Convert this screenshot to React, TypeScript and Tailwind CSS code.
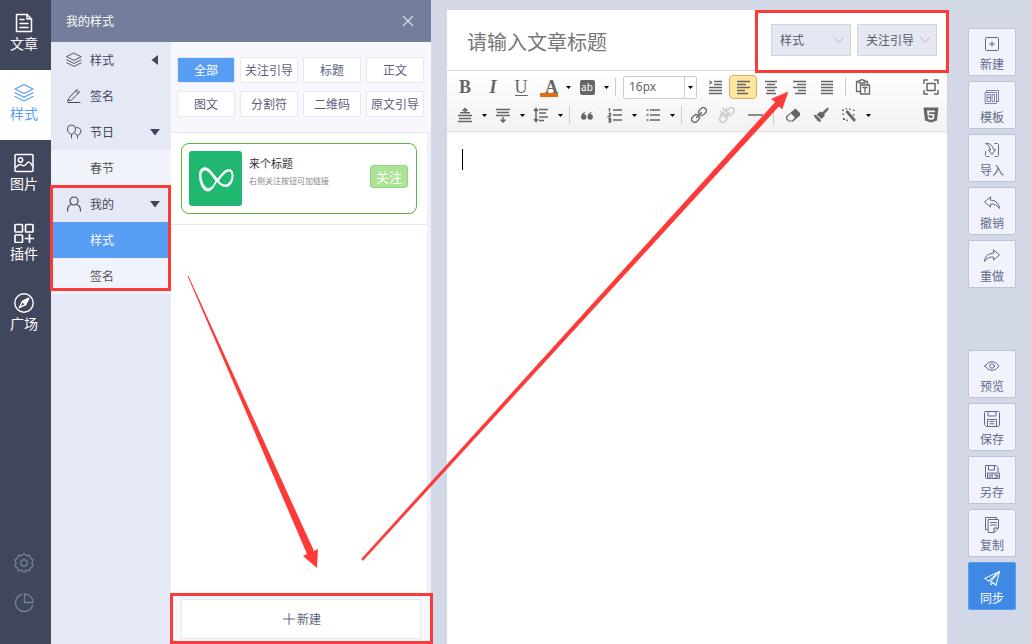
import { useState } from 'react';
import type { ReactNode } from 'react';
import clsx from 'clsx';

type IconProps = { children: ReactNode; size?: string; box?: number; width?: number };

function Line({ children, size = 'size-5', box = 20, width = 1.5 }: IconProps) {
	return (
		<svg
			className={clsx('shrink-0', size)}
			viewBox={`0 0 ${box} ${box}`}
			fill="none"
			stroke="currentColor"
			strokeWidth={width}
			strokeLinejoin="round"
			strokeLinecap="round"
			aria-hidden="true"
		>
			{children}
		</svg>
	);
}

function Solid({ children, box = 16, size = 'size-4' }: IconProps) {
	return (
		<svg className={clsx('shrink-0', size)} viewBox={`0 0 ${box} ${box}`} fill="currentColor" aria-hidden="true">
			{children}
		</svg>
	);
}

const layers = (
	<>
		<path d="M10 1.5 19 6l-9 4.5L1 6z" />
		<path d="m1 9.8 9 4.5 9-4.5M1 13.5 10 18l9-4.5" />
	</>
);

const mainNav = [
	{
		label: '文章',
		icon: (
			<Line width={1.5}>
				<path d="M2.500 1.500h10.500L17.500 6v12.500h-15z" />
				<path d="M13 1.500V6h4.500M6 6.500h4M6 10.500h8M6 14.500h8" />
			</Line>
		),
	},
	{ label: '样式', icon: <Line width={1.2}>{layers}</Line>, active: true },
	{
		label: '图片',
		icon: (
			<Line width={1.5}>
				<rect x="1" y="1.500" width="18" height="17" rx="1" />
				<circle cx="6.500" cy="7" r="2.200" />
				<path d="M1.500 14.500q4-4 6-2.500t4.500-.5q3-5.500 6.500 1.500" />
			</Line>
		),
	},
	{
		label: '插件',
		icon: (
			<Line width={1.7}>
				<rect x="1" y="1.500" width="7.500" height="7.500" rx=".8" />
				<rect x="11.500" y="1.500" width="7.500" height="7.500" rx=".8" />
				<rect x="1" y="12" width="7.500" height="7.500" rx=".8" />
				<path d="M15.500 11.500v8M11.500 15.500h8" />
			</Line>
		),
	},
	{
		label: '广场',
		icon: (
			<Line width={1.4}>
				<circle cx="10" cy="10" r="9.200" />
				<path d="m14.700 5.300-6.200 3-3.200 6.400 6.200-3z" />
				<path d="m14.700 5.300-6.200 3 3 3.400z" fill="currentColor" />
			</Line>
		),
	},
];

const filters = ['全部', '关注引导', '标题', '正文', '图文', '分割符', '二维码', '原文引导'];

const thin = { size: 'size-4', box: 16, width: 1 };

const topActions = [
	{
		label: '新建',
		icon: (
			<Line {...thin}>
				<rect x="1.500" y="1.500" width="13" height="13" rx="1" />
				<path d="M8 5.500v5M5.500 8h5" />
			</Line>
		),
	},
	{
		label: '模板',
		icon: (
			<Line {...thin} width={0.8}>
				<path d="M1.500 3.500h11v11h-11zM2.500 3.500v-2h12v11h-2M3.500 5.500h3v3h-3zM3.500 8.500h3v4h-3zM8.500 5.500h2v7h-2z" />
			</Line>
		),
	},
	{
		label: '导入',
		icon: (
			<Line {...thin}>
				<path d="M1.500 9.500v4l1 1H5M11 14.500h2.500l1-1v-11l-1-1H11" />
				<path d="M2 1.500q6-1 7.500 6H11.500L8 12.500 4.500 8h2Q6 3.500 2 1.500z" />
			</Line>
		),
	},
	{
		label: '撤销',
		icon: (
			<Line {...thin}>
				<path d="M6.500 2 .5 7l6 5V9q6-.5 9 4.500Q15 5.500 6.500 5z" />
			</Line>
		),
	},
	{
		label: '重做',
		icon: (
			<Line {...thin}>
				<path d="m9.500 2 6 5-6 5V9q-6-.5-9 4.500Q1 5.500 9.500 5z" />
			</Line>
		),
	},
];

const bottomActions = [
	{
		label: '预览',
		icon: (
			<Line {...thin}>
				<path d="M1 8q3-4.500 7-4.500T15 8q-3 4.500-7 4.500T1 8z" />
				<circle cx="8" cy="8" r="2.300" />
			</Line>
		),
	},
	{
		label: '保存',
		icon: (
			<Line {...thin}>
				<path d="M1.500.5h13l1 1v13l-1 1h-12l-2-2v-12zM4 .5v4.500h8V.5M3.500 15.500v-7h9v7M6 10.500h4M6 12.800h4" />
			</Line>
		),
	},
	{
		label: '另存',
		icon: (
			<Line {...thin}>
				<path d="M7 14.500H2.500l-1-1V1.500H12l2 2V8M4.500 1.500V6h6V1.500M3.500 14V9h4M5 11h2M5 13h2M8.500 9h7v5.500h-7zM10 10.500l4 2M13 10.500l1 2-2.500 1" />
			</Line>
		),
	},
	{
		label: '复制',
		icon: (
			<Line {...thin}>
				<path d="M3.500 12.500h-2v-12h11v2M4.500 2.500h10v8.500L10 15.500H4.500zM14.500 11H10v4.500M6.500 5.500h6M6.500 8h6" />
			</Line>
		),
	},
	{
		label: '同步',
		primary: true,
		icon: (
			<Line {...thin}>
				<path d="M15.500 1.500.5 8.500l4 2.500zM15.500 1.500 4.500 11M7 11.500V15l1.500-2 3.500 2zM15.500 1.500 12 15M7 11.500l8.500-10" />
			</Line>
		),
	},
];

function Caret() {
	return (
		<span className="flex w-2.5 justify-center">
			<svg className="h-[3px] w-[5px]" viewBox="0 0 5 3" fill="#000" aria-hidden="true">
				<path d="M0 0h5L2.500 3z" />
			</svg>
		</span>
	);
}

type ToolProps = { label: string; children: ReactNode; caret?: boolean; active?: boolean; faded?: boolean };

function Tool({ label, children, caret, active, faded }: ToolProps) {
	return (
		<button type="button" title={label} aria-label={label} className="flex h-6 items-center">
			<span
				className={clsx(
					'flex h-6 w-7 items-center justify-center rounded-sm border',
					active ? 'border-[#dcac6c] bg-[#ffe69f]' : 'border-transparent',
					faded ? 'text-[#c4c4c4]' : 'text-[#666]'
				)}
			>
				{children}
			</span>
			{caret && <Caret />}
		</button>
	);
}

function Sep() {
	return (
		<span className="flex w-2 justify-center">
			<span className="h-[18px] w-px bg-[#ccc]" />
		</span>
	);
}

function Bars({ d }: { d: string }) {
	return (
		<svg className="size-4" viewBox="0 0 16 16" fill="none" stroke="currentColor" strokeWidth="1.500" aria-hidden="true">
			<path d={d} />
		</svg>
	);
}

function Toolbar() {
	return (
		<div className="border-y border-t-[#ddd] border-b-[#e4e4e4] bg-linear-to-b from-white to-[#f2f2f2] py-0.5 pr-0.5 pl-1 shadow-xs">
			<div className="flex h-7 items-center">
				<Tool label="加粗">
					<b className="font-['Liberation_Serif',serif] text-lg leading-5">B</b>
				</Tool>
				<Tool label="斜体">
					<i className="font-['Liberation_Serif',serif] text-lg leading-5 font-bold">I</i>
				</Tool>
				<Tool label="下划线">
					<span className="border-b border-current font-['Liberation_Serif',serif] text-lg leading-4">U</span>
				</Tool>
				<Tool label="字体颜色" caret>
					<span className="h-5 w-[18px] border-b-4 border-[#e46c0a] text-right font-['Liberation_Serif',serif] text-lg leading-5 font-bold">
						A
					</span>
				</Tool>
				<Tool label="背景色" caret>
					<span className="h-[15px] w-[15px] rounded-xs bg-[#666] text-center font-['Noto_Sans',sans-serif] text-[10px] leading-[14px] text-white">
						ab
					</span>
				</Tool>
				<Sep />
				<div className="relative mx-1">
					<select
						aria-label="字号"
						defaultValue="16px"
						className="block h-[23px] w-[74px] appearance-none rounded-xs border border-[#ccc] bg-white pl-[5px] font-['Noto_Sans',sans-serif] text-xs text-[#666]"
					>
						<option>14px</option>
						<option>16px</option>
						<option>18px</option>
					</select>
					<span className="pointer-events-none absolute inset-y-px right-px flex w-3 items-center justify-center border-l border-[#ccc]">
						<Caret />
					</span>
				</div>
				<Tool label="首行缩进">
					<Bars d="M7 2.500h8M7 5.500h8M2 8.500h13M2 11.500h13M2 14.500h13M2.500 2l2 1.500-2 1.500" />
				</Tool>
				<Tool label="居左" active>
					<Bars d="M2 2.500h13M2 5.500h9M2 8.500h13M2 11.500h8M2 14.500h11" />
				</Tool>
				<Tool label="居中">
					<Bars d="M2 2.500h12M4 5.500h8M2 8.500h12M4 11.500h8M3 14.500h10" />
				</Tool>
				<Tool label="居右">
					<Bars d="M2 2.500h13M6 5.500h9M2 8.500h13M7 11.500h8M4 14.500h11" />
				</Tool>
				<Tool label="两端对齐">
					<Bars d="M2 2.500h12M2 5.500h12M2 8.500h12M2 11.500h12M2 14.500h12" />
				</Tool>
				<Sep />
				<Tool label="粘贴">
					<Line size="size-4" box={16} width={1.3}>
						<path d="M5 12.500H1.500V2.500H4M10 2.500h2.500V5M4 1.500h1.500l1-1h1l1 1H10V4H4zM5.500 6h9v9h-9z" />
						<path d="M8 8.500h4M10 8.500v4.500" />
					</Line>
				</Tool>
				<span className="ml-auto">
					<Tool label="全屏">
						<Line size="size-4" box={16} width={1.5}>
							<path d="M1 4.500V1h3.500M11.500 1H15v3.500M15 11.500V15h-3.500M4.500 15H1v-3.500M4 4.500h8v7H4z" />
						</Line>
					</Tool>
				</span>
			</div>
			<div className="flex h-7 items-center">
				<Tool label="段前距" caret>
					<Bars d="M1 8.500h14M2 11.500h12M1 14.500h14M3 5.800h10M8 6V2M5.500 4 8 1.500 10.500 4" />
				</Tool>
				<Tool label="段后距" caret>
					<Bars d="M1 2.500h14M2 5.500h12M1 8.500h14M8 10v4.500M5.500 12.500 8 15l2.500-2.500" />
				</Tool>
				<Tool label="行间距" caret>
					<Bars d="M6 2.500h9M6 6h7M6 10h9M6 13.500h5M3 2v12M1 4l2-2.500L5 4M1 12l2 2.500L5 12" />
				</Tool>
				<Sep />
				<Tool label="引用">
					<Solid>
						<path d="M7.500 4.500Q2 5.500 2 10a2.700 2.700 0 1 0 3-2.700Q5 5.500 7.500 4.500zM14 4.500Q8.500 5.500 8.500 10a2.700 2.700 0 1 0 3-2.700q0-1.800 2.500-2.800z" />
					</Solid>
				</Tool>
				<Tool label="有序列表" caret>
					<Bars d="M6 3h9M6 8h9M6 13h9M2.500 1v3.500M1.500 6.500h2v1.500l-2 1.500h2M1.500 11.500h2V15h-2M1.500 13h2" />
				</Tool>
				<Tool label="无序列表" caret>
					<Bars d="M5 3h10M5 8h10M5 13h10M1.500 3h2M1.500 8h2M1.500 13h2" />
				</Tool>
				<Sep />
				<Tool label="超链接">
					<Line size="size-4" box={16} width={1.3}>
						<g transform="rotate(-45 8 8)">
							<rect x="-1" y="5" width="8" height="6" rx="2.500" />
							<rect x="9" y="5" width="8" height="6" rx="2.500" />
							<path d="M4.500 8h7" />
						</g>
					</Line>
				</Tool>
				<Tool label="取消链接" faded>
					<Line size="size-4" box={16} width={1.3}>
						<g transform="rotate(-45 8 8)">
							<rect x="-1" y="5" width="8" height="6" rx="2.500" />
							<rect x="9" y="5" width="8" height="6" rx="2.500" />
							<path d="M4.500 8h7" />
						</g>
						<path d="m3.500 1 2 3M7.500 1 7 4M1 4.500l3.500 1M1.500 7.500 4 7" />
					</Line>
				</Tool>
				<Tool label="分隔线">
					<Bars d="M1 8h15" />
				</Tool>
				<Sep />
				<span className="ml-0.5 flex">
					<Tool label="清除格式">
						<Solid>
							<path d="M10.500 1.500 15 6v2.500l-7 6H3.500L1 12V9.500zM6 6.500l-4 4V11l2 2.500h3l3-3z" fillRule="evenodd" />
						</Solid>
					</Tool>
					<Tool label="格式刷">
						<Solid>
							<path d="M14.500.5 16 2l-5 5.500 1 1L8.500 12 3.500 7.500 7.500 4.500l1.500 1zM.5 8l2.500 0 5 5-1 2.500Q6 14 5 13.500l-.5 1Q4 12 2.500 11.500z" />
						</Solid>
					</Tool>
					<Tool label="自动排版" caret>
						<Solid>
							<path d="m4.500 5 2-2L15 13l-2 2zM1 2.500h2v1.500H1zM8 1.500h1.500V3H8zM12 2.500h1.500V4H12zM4.500 1H6v1.500H4.500zM1.500 6.500H3V8H1.500zM12 7h1.500v1.500H12zM2 11h2v2H2zM5.500 12.500H7V14H5.500z" />
						</Solid>
					</Tool>
				</span>
				<span className="ml-auto">
					<Tool label="源代码">
						<Solid>
							<path
								d="M.5.5h15L14 13.500 8 15.500l-6-2zM4 3.500l.5 5h5l-.2 2.200L8 11.200l-1.500-.5-.1-1.200H4.700l.3 2.600 3 1 3-1 .5-5.200H6.200L6 5.200h5.800l.2-1.700z"
								fillRule="evenodd"
							/>
						</Solid>
					</Tool>
				</span>
			</div>
		</div>
	);
}

type NavRowProps = { label: string; icon: ReactNode; arrow?: 'left' | 'down' };

function NavRow({ label, icon, arrow }: NavRowProps) {
	return (
		<button type="button" className="flex h-9 w-full items-center gap-2 pr-[11px] pl-[15px] text-xs text-[#40465b]">
			{icon}
			{label}
			{arrow && (
				<svg className="ml-auto size-2.5" viewBox="0 0 10 10" fill="currentColor" aria-hidden="true">
					<path d={arrow === 'left' ? 'M8 0v10L1.500 5z' : 'M0 2h10L5 8.500z'} />
				</svg>
			)}
		</button>
	);
}

function NavChild({ label, active }: { label: string; active?: boolean }) {
	return (
		<button
			type="button"
			className={clsx(
				'h-9 w-full pl-[39px] text-left text-xs',
				active ? 'bg-[#579df4] text-white' : 'bg-[#f0f3fb] text-[#555]'
			)}
		>
			{label}
		</button>
	);
}

function StylePanel() {
	const [filter, setFilter] = useState('全部');

	return (
		<section className="flex w-[380px] shrink-0 flex-col">
			<header className="flex h-[42px] items-center justify-between bg-[#747d9a] px-[15px] text-xs text-white">
				<h2>我的样式</h2>
				<button type="button" aria-label="关闭" className="mr-0.5 text-[#d5d9e6]">
					<Line size="size-3" box={12} width={1.3}>
						<path d="m1.500 1.500 9 9M10.500 1.500l-9 9" />
					</Line>
				</button>
			</header>
			<div className="flex flex-1">
				<nav className="w-[120px] bg-[#e5e9f5]">
					<NavRow label="样式" arrow="left" icon={<Line size="size-4" width={1.1}>{layers}</Line>} />
					<NavRow
						label="签名"
						icon={
							<Line {...thin}>
								<path d="M3 10 11 1.500l2.500 2.500L5.500 12 2 13zM9.500 3l2.500 2.500M2 14.500h12" />
							</Line>
						}
					/>
					<NavRow
						label="节日"
						arrow="down"
						icon={
							<Line {...thin} width={0.9}>
								<path d="M5.500 10.500C3 9.500 1.500 8 1.500 5a4 4 0 0 1 8 0C9.500 8 8 9.500 5.500 10.500zv3.500M10.500 3.500c3 0 4.500 1.500 4.500 3.500q0 3-3.500 4.500Q9.500 10.500 8.800 9M11.500 11.500v2.500" />
							</Line>
						}
					/>
					<NavChild label="春节" />
					<div className="relative">
						<NavRow
							label="我的"
							arrow="down"
							icon={
								<Line {...thin} width={1.2}>
									<circle cx="8" cy="5" r="4" />
									<path d="M1.500 15q0-6 4-6.500M14.500 15q0-6-4-6.500" />
								</Line>
							}
						/>
						<NavChild label="样式" active />
						<NavChild label="签名" />
						<div className="pointer-events-none absolute -top-px right-0 bottom-[3px] -left-px border-3 border-[#fc3a38]" />
					</div>
				</nav>
				<div className="flex flex-1 flex-col bg-white">
					<div className="grid grid-cols-4 gap-x-[5px] gap-y-2 border-b border-[#e5e8f2] bg-[#f7f8fd] py-[15px] pr-[7px] pl-1.5">
						{filters.map((name) => (
							<button
								key={name}
								type="button"
								onClick={() => setFilter(name)}
								className={clsx(
									'h-[26px] rounded-xs border border-[#e5e8f2] text-xs whitespace-nowrap',
									filter === name ? 'bg-[#579df4] text-white' : 'bg-white text-[#5a6180]'
								)}
							>
								{name}
							</button>
						))}
					</div>
					<div className="flex-1 border-r-4 border-[#f0f1f8]">
						<div className="border-b border-[#e5e8f2] p-2.5">
							<article className="flex items-start rounded-[8px] border border-[#5cb83c] py-[7px] pr-2 pl-[7px]">
								<div className="flex h-[55px] w-[53px] items-center justify-center rounded-[3px] bg-[#20b870]">
									<svg className="w-9" viewBox="0 0 36 26" fill="#f6fcf9" fillRule="evenodd" aria-hidden="true">
										<path d="M1 8C2 0 9-1 14 6l5.500 6.500C24 7 27 3 31 3c5 0 6 9 2.500 14.500S24 22 19 16c-3 5-5 9-9 9.500C4 26 .5 15 1 8zm2.500 1c0 6 3 13 7 13s5-4 7-7L13 9C9 3 4 3 3.500 9zm17.500 5.500c3 4.500 7.500 5.500 10.500 1.500S34 5.500 31 5.500s-6 4-10 9z" />
									</svg>
								</div>
								<div className="ml-[7px] flex-1 pt-1">
									<h3 className="text-[11px] leading-4 text-[#333]">来个标题</h3>
									<p className="mt-0.5 text-[8px] leading-4 text-[#888]">右侧关注按钮可加链接</p>
								</div>
								<button
									type="button"
									className="mt-3.5 h-[23px] rounded-[3px] border border-[#8fd97c] bg-[#ade397] px-[5px] text-[13px] leading-5 text-white"
								>
									关注
								</button>
							</article>
						</div>
					</div>
					<footer className="relative bg-[#f7f8fd] px-2.5 pt-1.5 pb-[5px]">
						<button
							type="button"
							className="flex h-10 w-full items-center justify-center gap-0.5 border border-[#e5e8f2] bg-white pl-0.5 text-xs text-[#5a6180]"
						>
							<Line size="size-3" box={12} width={1}>
								<path d="M6 .5v11M.5 6h11" />
							</Line>
							新建
						</button>
						<div className="pointer-events-none absolute inset-y-0 -right-0.5 -left-px border-3 border-[#fc3a38]" />
					</footer>
				</div>
			</div>
		</section>
	);
}

function TitleSelect({ label, options }: { label: string; options: string[] }) {
	return (
		<div className="relative">
			<select
				aria-label={label}
				className="h-8 w-20 appearance-none border border-[#d3d5da] bg-[#e4e8f2] pl-2 text-xs text-[#555a68]"
			>
				{options.map((o) => (
					<option key={o}>{o}</option>
				))}
			</select>
			<svg
				className="pointer-events-none absolute top-3 right-1.5 h-2 w-3"
				viewBox="0 0 12 8"
				fill="none"
				stroke="#b4b8c4"
				aria-hidden="true"
			>
				<path d="m1.500 1.500 4.500 5 4.500-5" />
			</svg>
		</div>
	);
}

type Action = { label: string; icon: ReactNode; primary?: boolean };

function ActionGroup({ items }: { items: Action[] }) {
	return (
		<div className="flex flex-col gap-[5px]">
			{items.map((a) => (
				<button
					key={a.label}
					type="button"
					className={clsx(
						'flex size-12 flex-col items-center gap-1 rounded-xs border pt-[7px] text-xs leading-4',
						a.primary
							? 'border-[#579df4] bg-[#3f89e4] text-white'
							: 'border-[#bcc4dc] bg-[#f0f3fc] text-[#626a88]'
					)}
				>
					{a.icon}
					{a.label}
				</button>
			))}
		</div>
	);
}

export default function App() {
	return (
		<div className="relative flex min-h-screen bg-[#d2d8e6] font-['Noto_Sans_CJK_SC',sans-serif]">
			<aside className="flex w-[51px] shrink-0 flex-col justify-between bg-[#40465b] text-white">
				<nav>
					{mainNav.map((item) => (
						<button
							key={item.label}
							type="button"
							className={clsx(
								'flex h-[70px] w-full flex-col items-center justify-center pr-[3px] pb-1 text-sm leading-5',
								item.active && 'bg-white text-[#579df4]'
							)}
						>
							{item.icon}
							{item.label}
						</button>
					))}
				</nav>
				<div className="flex flex-col items-center gap-5 pr-[3px] pb-[31px] text-[#747d9a]">
					<button type="button" aria-label="设置">
						<Line width={1.4}>
							<path d="m10 .8 2.400 1.800 3.100-.4 1 2.900 2.500 1.700-1 3.200 1 3-2.600 1.800-1 2.900-3.100-.4L10 19.200l-2.400-1.900-3.100.4-1-2.900L1 13l1-3-1-3.200 2.500-1.700 1-2.900 3.100.4z" />
							<circle cx="10" cy="10" r="3.200" />
						</Line>
					</button>
					<button type="button" aria-label="统计">
						<Line width={1.4}>
							<path d="M7.500 1.500a8.700 8.700 0 1 0 11 11M10.500 1v8.500H19A8.500 8.500 0 0 0 10.500 1z" />
						</Line>
					</button>
				</div>
			</aside>

			<StylePanel />

			<main className="flex flex-1 gap-[21px] pr-[15px] pl-4">
				<section className="mt-2.5 flex flex-1 flex-col bg-white">
					<div className="flex h-[60px] items-center justify-between pr-2.5 pl-5">
						<input
							aria-label="文章标题"
							placeholder="请输入文章标题"
							className="h-10 min-w-0 flex-1 pt-0.5 text-xl text-[#555] outline-none placeholder:text-[#777]"
						/>
						<div className="relative z-10 flex gap-1.5">
							<TitleSelect label="类型" options={['样式', '签名']} />
							<TitleSelect label="分类" options={filters.slice(1)} />
							<div className="pointer-events-none absolute -top-3.5 -right-3 -bottom-[17px] -left-4 border-3 border-[#fc3a38]" />
						</div>
					</div>
					<Toolbar />
					<div role="textbox" aria-label="正文" className="flex-1 px-[15px] pt-[17px]">
						<span className="block h-[21px] w-px bg-black" />
					</div>
				</section>
				<div className="flex flex-col justify-between pt-7 pb-[34px]">
					<ActionGroup items={topActions} />
					<ActionGroup items={bottomActions} />
				</div>
			</main>

			<svg
				className="pointer-events-none absolute top-0 left-0 z-20"
				width="1031"
				height="644"
				viewBox="0 0 1031 644"
				fill="#fc3a38"
				aria-hidden="true"
			>
				<path d="M187.500 276h1L314 551l4-2-1 19-14-12 4-2z" />
				<path d="m361.500 559 414-457-4-3 16.500-7-6 17-3-3L363 560.500z" stroke="#fc3a38" strokeWidth=".6" />
			</svg>
		</div>
	);
}
